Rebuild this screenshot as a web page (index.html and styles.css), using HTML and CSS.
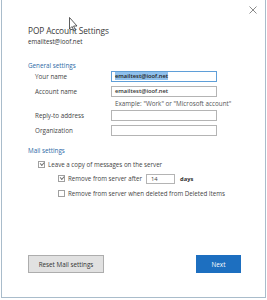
FILE: index.html
```html
<!DOCTYPE html>
<html lang="en">
<head>
  <meta charset="UTF-8">
  <title>POP Account Settings</title>
  <link rel="stylesheet" href="styles.css">
</head>
<body>
  <div class="window">
    <div class="close">
      <svg width="8" height="8" viewBox="0 0 8 8"><path d="M0.5 0.5L7.5 7.5M7.5 0.5L0.5 7.5" stroke="#8a8a8a" stroke-width="1"/></svg>
    </div>

    <h1 class="title">POP Account Settings</h1>
    <div class="account">emailtest@ioof.net</div>

    <!-- General settings -->
    <div class="section-head">General settings</div>
    <div class="form">
      <label>Your name</label>
      <div class="field focused"><span class="selected">emailtest@ioof.net</span></div>
      <label>Account name</label>
      <div class="field">emailtest@ioof.net</div>
      <span></span>
      <div class="hint">Example: "Work" or "Microsoft account"</div>
      <label>Reply-to address</label>
      <div class="field"></div>
      <label>Organization</label>
      <div class="field"></div>
    </div>

    <!-- Mail settings -->
    <div class="section-head mail">Mail settings</div>
    <div class="check level1">
      <span class="box checked"></span>Leave a copy of messages on the server
    </div>
    <div class="check level2">
      <span class="box checked"></span>Remove from server after
      <div class="days-input">14</div>
      <b class="days">days</b>
    </div>
    <div class="check level2">
      <span class="box"></span>Remove from server when deleted from Deleted Items
    </div>

    <div class="buttons">
      <button class="reset">Reset Mail settings</button>
      <button class="next">Next</button>
    </div>

    <svg class="cursor" width="9" height="15" viewBox="0 0 9 15"><path d="M0.5 0.5L0.5 12L3 9.5L5 14L6.5 13.3L4.6 9L8 9Z" fill="#fff" stroke="#333" stroke-width="0.8" stroke-linejoin="round"/></svg>
  </div>
</body>
</html>
```

FILE: styles.css
```css
body {
  margin: 0;
  background: #fff;
  font-family: "Open Sans", "Noto Sans", sans-serif;
  color: #444;
}
.window {
  position: relative;
  box-sizing: border-box;
  width: 265px;
  height: 298px;
  margin-left: 1px;
  border: 1px solid #a9bccb;
  border-top: none;
  background: #fff;
  padding: 25px 0 0 26px;
}
.close {
  position: absolute;
  top: 6px;
  right: 8px;
  line-height: 0;
}
.title {
  margin: 0;
  font-family: "Open Sans", sans-serif;
  font-weight: 400;
  font-size: 8.3px;
  line-height: 12px;
  color: #3a3a3a;
  letter-spacing: -0.1px;
}
.account {
  font-size: 6.2px;
  line-height: 9px;
  color: #333;
}
.section-head {
  margin-top: 15px;
  font-size: 6.3px;
  line-height: 9px;
  color: #2e6aa6;
}
.section-head.mail {
  margin-top: 10px;
}
.form {
  display: grid;
  grid-template-columns: 76px 106px;
  row-gap: 4px;
  align-items: center;
  margin: 1px 0 0 7px;
  font-size: 6.3px;
}
.field {
  box-sizing: border-box;
  height: 11px;
  border: 1px solid #b4b4b4;
  padding: 0 3px;
  font-size: 5.8px;
  font-weight: 600;
  line-height: 9px;
  color: #333;
}
.field.focused {
  border-color: #5f9fd8;
}
.selected {
  background: #8fc0ec;
  color: #222;
}
.hint {
  margin: -1px 0 -1px 4px;
  white-space: nowrap;
  font-size: 6.3px;
  line-height: 7px;
  color: #555;
}
.check {
  display: flex;
  align-items: center;
  height: 14.5px;
  font-size: 6.2px;
  color: #444;
}
.check.level1 {
  margin: 2px 0 0 10px;
}
.check.level2 {
  margin-left: 30px;
}
.box {
  position: relative;
  box-sizing: border-box;
  width: 7px;
  height: 7px;
  border: 1px solid #a0a0a0;
  margin-right: 3px;
}
.box.checked::after {
  content: "";
  position: absolute;
  left: 1px;
  top: 0;
  width: 3px;
  height: 1.5px;
  border-left: 1px solid #777;
  border-bottom: 1px solid #777;
  transform: rotate(-45deg);
}
.days-input {
  box-sizing: border-box;
  width: 29px;
  height: 10px;
  border: 1px solid #b4b4b4;
  margin-left: 4px;
  padding-left: 4px;
  font-size: 5.8px;
  line-height: 8px;
}
.days {
  margin-left: 5px;
  font-size: 5.8px;
  color: #333;
}
.buttons {
  position: absolute;
  left: 26px;
  right: 24px;
  top: 255px;
  display: flex;
  justify-content: space-between;
}
button {
  box-sizing: border-box;
  height: 18px;
  font-family: "Open Sans", sans-serif;
  font-size: 6.3px;
  cursor: pointer;
}
.reset {
  width: 76px;
  background: #e1e1e1;
  border: 1px solid #adadad;
  color: #333;
}
.next {
  width: 45px;
  background: #1d6fc0;
  border: none;
  color: #fff;
}
.cursor {
  position: absolute;
  left: 67px;
  top: 17px;
}
```
